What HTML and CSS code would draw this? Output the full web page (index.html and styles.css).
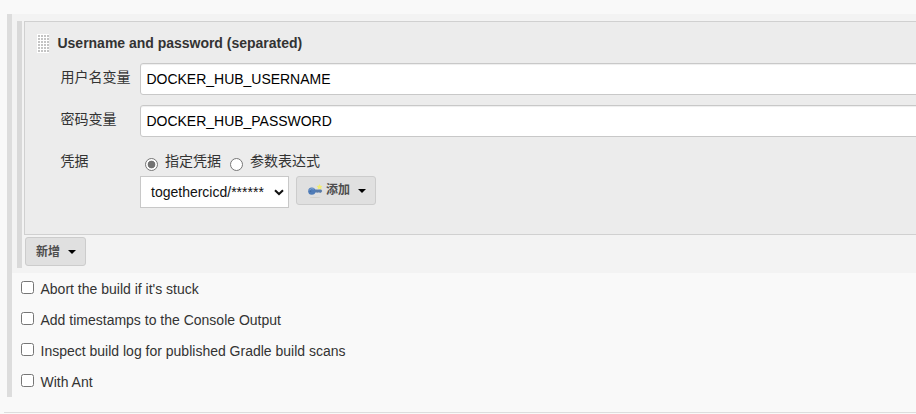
FILE: index.html
```html
<!DOCTYPE html>
<html lang="zh-CN">
<head>
<meta charset="utf-8">
<title>构建环境</title>
<link rel="stylesheet" href="styles.css">
</head>
<body>
<main class="section">
  <div class="environment">
    <div class="bindings">
      <div class="binding-list">
        <section class="card">
          <header class="card-head"><span class="handle"></span><h2>Username and password (separated)</h2></header>
          <div class="field"><label class="label" for="user">用户名变量</label><input class="text" id="user" type="text" value="DOCKER_HUB_USERNAME"></div>
          <div class="field"><label class="label" for="pass">密码变量</label><input class="text" id="pass" type="text" value="DOCKER_HUB_PASSWORD"></div>
          <div class="field credentials">
            <span class="label">凭据</span>
            <div class="control">
              <div class="radios">
                <label class="first"><input type="radio" name="cred" checked>指定凭据</label>
                <label><input type="radio" name="cred">参数表达式</label>
              </div>
              <div class="picker">
                <div class="select"><span>togethercicd/******</span>
                  <svg width="10" height="7" viewBox="0 0 10 7"><path d="M1 1.200 5 5l4-3.800" fill="none" stroke="#111" stroke-width="2"/></svg>
                </div>
                <button class="button add">
                  <svg class="key" width="16" height="16" viewBox="0 0 16 16">
                    <ellipse cx="8" cy="14.500" rx="5.500" ry=".6" fill="#cfcfcb"/>
                    <path d="M7 6.500h7.200l1 1.500-1.200 1.700h-1.300l-.8-.5-1 .6-1-.4H7z" fill="#587ba9"/>
                    <circle cx="4.800" cy="8.200" r="3.600" fill="#4f7cb8"/>
                    <path d="M2.300 7Q4 4.800 7 6" fill="none" stroke="#83a8d5"/>
                    <circle cx="3.600" cy="8.300" r=".8" fill="#40699f"/>
                    <path d="m12.500 1 .9 1.800 2 .1-1.300 1.500.5 2-2.100-.9-2 .9.500-2-1.400-1.400 2-.2z" fill="#f2ed70"/>
                  </svg>
                  <span>添加</span><i class="caret"></i>
                </button>
              </div>
            </div>
          </div>
        </section>
        <button class="button new"><span>新增</span><i class="caret"></i></button>
      </div>
    </div>
    <div class="options">
      <label><input type="checkbox"><span>Abort the build if it's stuck</span></label>
      <label><input type="checkbox"><span>Add timestamps to the Console Output</span></label>
      <label><input type="checkbox"><span>Inspect build log for published Gradle build scans</span></label>
      <label><input type="checkbox"><span>With Ant</span></label>
    </div>
  </div>
</main>
</body>
</html>
```
FILE: styles.css
```css
* { box-sizing: border-box; }

body {
  margin: 0;
  overflow: hidden;
  background: #f9f9f9;
  color: #333;
  font: 14px/20px "Liberation Sans", "Noto Sans CJK SC", sans-serif;
}

.section {
  height: 413px;
  margin-left: 4px;
  padding: 14px 0 0 3px;
  border-bottom: 1px solid #ddd;
}

.environment { height: 383px; border-left: 5px solid #ddd; }
.bindings { height: 259px; padding: 7px 0 0 5px; background: #f3f3f3; }
.binding-list { height: 247px; padding-left: 2px; border-left: 5px solid #d9d9d9; }

.card {
  height: 214px;
  padding: 12px 0 0 12px;
  border: 1px solid #d0d0d0;
  border-right: 0;
  background: #ececec;
}

.card-head { display: flex; height: 29px; }
.card-head h2 { margin: 0 0 0 8.500px; font-size: 14px; line-height: 19px; letter-spacing: -0.015px; }

.handle {
  width: 12px;
  height: 19px;
  background: conic-gradient(from 270deg at 2px 2px, #c4c4c4 25%, #fff 0) 1px 1px / 3px 3px;
}

.field {
  display: flex;
  height: 32px;
  margin-bottom: 10px;
  padding-left: 23px;
}
.label { flex: none; width: 80px; padding: 4px 0 0 0.500px; }
.text {
  flex: 1;
  min-width: 0;
  height: 32px;
  margin-right: -6px;
  padding: 0 5.500px;
  border: 1px solid #c8c8c8;
  border-radius: 3px;
  background: #fff;
  color: #000;
  font: inherit;
  letter-spacing: -0.02px;
  box-shadow: inset 0 1px 1px #eee;
}
.credentials { height: auto; margin: 0; }

.radios { display: flex; height: 29px; padding-top: 4px; }
.radios label { display: flex; height: 20px; }
.radios .first { width: 85px; }
.radios input {
  appearance: none;
  width: 13px;
  height: 13px;
  margin: 7px 7px 0 5px;
  border: 1px solid #767676;
  border-radius: 50%;
  background: #fff;
}
.radios input:checked { background: radial-gradient(circle, #737373 0 3.500px, #fff 4.200px); }

.picker { display: flex; align-items: flex-start; gap: 7px; }
.select {
  display: flex;
  align-items: center;
  justify-content: space-between;
  width: 149px;
  height: 32px;
  padding: 0 4px 0 10px;
  border: 1px solid #c8c8c8;
  background: #fff;
  color: #111;
}

.button {
  display: flex;
  align-items: center;
  height: 29px;
  padding: 0 9px 0 10px;
  border: 1px solid #ccc;
  border-radius: 3px;
  background: #e0e0e0;
  color: #4d4d4d;
  font: bold 12px/18px "Liberation Sans", "Noto Sans CJK SC", sans-serif;
}
.add { width: 80px; }
.add span { margin-top: -1px; }
.key { margin-right: 3px; }
.new { width: 61px; margin: 2px 0 0 1px; }
.caret {
  margin: 1px 0 0 auto;
  border: 4px solid transparent;
  border-top-color: #000;
  border-bottom: 0;
}

.options { padding: 8px 0 0 9px; }
.options label { display: flex; height: 31px; }
.options input {
  appearance: none;
  width: 13px;
  height: 13px;
  margin: 0 6.500px 0 0;
  border: 1px solid #767676;
  border-radius: 2.500px;
  background: #fff;
}
.options span { margin-top: -2px; }
```
